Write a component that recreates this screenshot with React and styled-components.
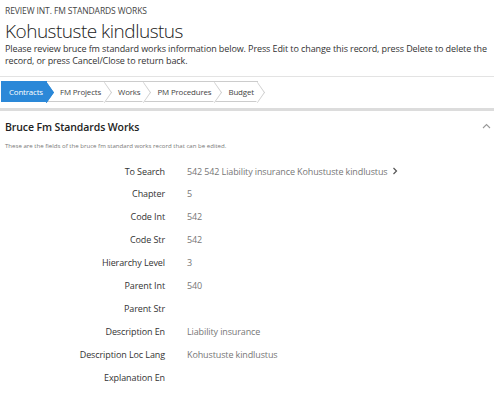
import React from "react";
import styled, { createGlobalStyle } from "styled-components";

const Global = createGlobalStyle`
  html, body { margin: 0; padding: 0; background: #fff; }
  body { font-family: "Open Sans", "Noto Sans", sans-serif; color: #333; }
  * { box-sizing: border-box; }
`;

const Page = styled.div`
  width: 494px;
  height: 396px;
  overflow: hidden;
  background: #fff;
`;

const Header = styled.header`
  padding: 5px 5px 9px 5px;
  border-bottom: 1px solid #e3e3e3;
`;

const Overline = styled.div`
  font-size: 8.5px;
  line-height: 12px;
  color: #444;
  letter-spacing: -0.1px;
`;

const Title = styled.h1`
  margin: 0;
  padding-top: 2px;
  font-size: 19px;
  font-weight: 300;
  line-height: 24px;
  color: #222;
  letter-spacing: -0.5px;
`;

const Lead = styled.p`
  margin: 0;
  font-size: 9px;
  line-height: 12px;
  color: #333;
  letter-spacing: -0.1px;
`;

const Crumbs = styled.nav`
  display: flex;
  padding: 4px 0 0 1px;
`;

const Crumb = styled.div`
  position: relative;
  height: 21px;
  display: flex;
  align-items: center;
  padding: 0 4px 0 ${(p) => (p.$first ? "8px" : "13px")};
  font-size: 7.9px;
  letter-spacing: -0.15px;
  color: ${(p) => (p.$active ? "#fff" : "#444")};
  background: ${(p) => (p.$active ? "#2b88d8" : "#fff")};
  border-top: 1px solid ${(p) => (p.$active ? "#2b88d8" : "#ccc")};
  border-bottom: 1px solid ${(p) => (p.$active ? "#2b88d8" : "#ccc")};
  z-index: ${(p) => p.$z};

  &::after {
    content: "";
    position: absolute;
    right: -7px;
    top: 2.5px;
    width: 14px;
    height: 14px;
    background: ${(p) => (p.$active ? "#2b88d8" : "#fff")};
    border-top: 1px solid ${(p) => (p.$active ? "#2b88d8" : "#ccc")};
    border-right: 1px solid ${(p) => (p.$active ? "#2b88d8" : "#ccc")};
    transform: scaleX(0.7) rotate(45deg);
  }
`;

const CrumbText = styled.span`
  position: relative;
  z-index: 1;
`;

const Divider = styled.div`
  height: 3px;
  background: #dcdcdc;
  margin-top: 6px;
`;

const Section = styled.section`
  padding: 7px 3px 0 5px;
`;

const SectionHead = styled.div`
  display: flex;
  align-items: center;
  justify-content: space-between;
  height: 18px;
`;

const SectionTitle = styled.h2`
  margin: 0;
  font-size: 10.5px;
  font-weight: 600;
  color: #222;
  letter-spacing: -0.1px;
`;

const Collapse = styled.svg`
  width: 9px;
  height: 6px;
  margin-top: -2px;
`;

const Hint = styled.div`
  margin-top: 5px;
  font-size: 6.1px;
  line-height: 10px;
  color: #777;
`;

const Form = styled.div`
  display: grid;
  grid-template-columns: 160px 1fr;
  column-gap: 22px;
  margin-top: 9.5px;
`;

const Label = styled.div`
  text-align: right;
  font-size: 9px;
  color: #333;
  height: 22.9px;
  line-height: 22.9px;
  letter-spacing: -0.1px;
`;

const Value = styled.div`
  font-size: 9px;
  color: #777;
  height: 22.9px;
  line-height: 22.9px;
  display: flex;
  align-items: flex-start;
  gap: 4px;
  letter-spacing: -0.12px;
`;

const Arrow = styled.svg`
  width: 6px;
  height: 8px;
  margin-top: 6px;
`;

const fields = [
  ["To Search", "542 542 Liability insurance Kohustuste kindlustus", true],
  ["Chapter", "5"],
  ["Code Int", "542"],
  ["Code Str", "542"],
  ["Hierarchy Level", "3"],
  ["Parent Int", "540"],
  ["Parent Str", ""],
  ["Description En", "Liability insurance"],
  ["Description Loc Lang", "Kohustuste kindlustus"],
  ["Explanation En", ""],
];

const tabs = ["Contracts", "FM Projects", "Works", "PM Procedures", "Budget"];

export default function App() {
  return (
    <Page>
      <Global />
      <Header>
        <Overline>REVIEW INT. FM STANDARDS WORKS</Overline>
        <Title>Kohustuste kindlustus</Title>
        <Lead>
          Please review bruce fm standard works information below. Press Edit to change this record, press Delete to delete the record, or press Cancel/Close to return back.
        </Lead>
      </Header>
      <Crumbs>
        {tabs.map((t, i) => (
          <Crumb key={t} $active={i === 0} $first={i === 0} $z={10 - i}>
            <CrumbText>{t}</CrumbText>
          </Crumb>
        ))}
      </Crumbs>
      <Divider />
      <Section>
        <SectionHead>
          <SectionTitle>Bruce Fm Standards Works</SectionTitle>
          <Collapse viewBox="0 0 9 6">
            <path d="M1 5 L4.5 1.5 L8 5" fill="none" stroke="#999" strokeWidth="1.1" />
          </Collapse>
        </SectionHead>
        <Hint>These are the fields of the bruce fm standard works record that can be edited.</Hint>
        <Form>
          {fields.map(([l, v, link]) => (
            <React.Fragment key={l}>
              <Label>{l}</Label>
              <Value>
                {v}
                {link && (
                  <Arrow viewBox="0 0 6 8">
                    <path d="M1.5 1 L4.5 4 L1.5 7" fill="none" stroke="#555" strokeWidth="1.2" />
                  </Arrow>
                )}
              </Value>
            </React.Fragment>
          ))}
        </Form>
      </Section>
    </Page>
  );
}
